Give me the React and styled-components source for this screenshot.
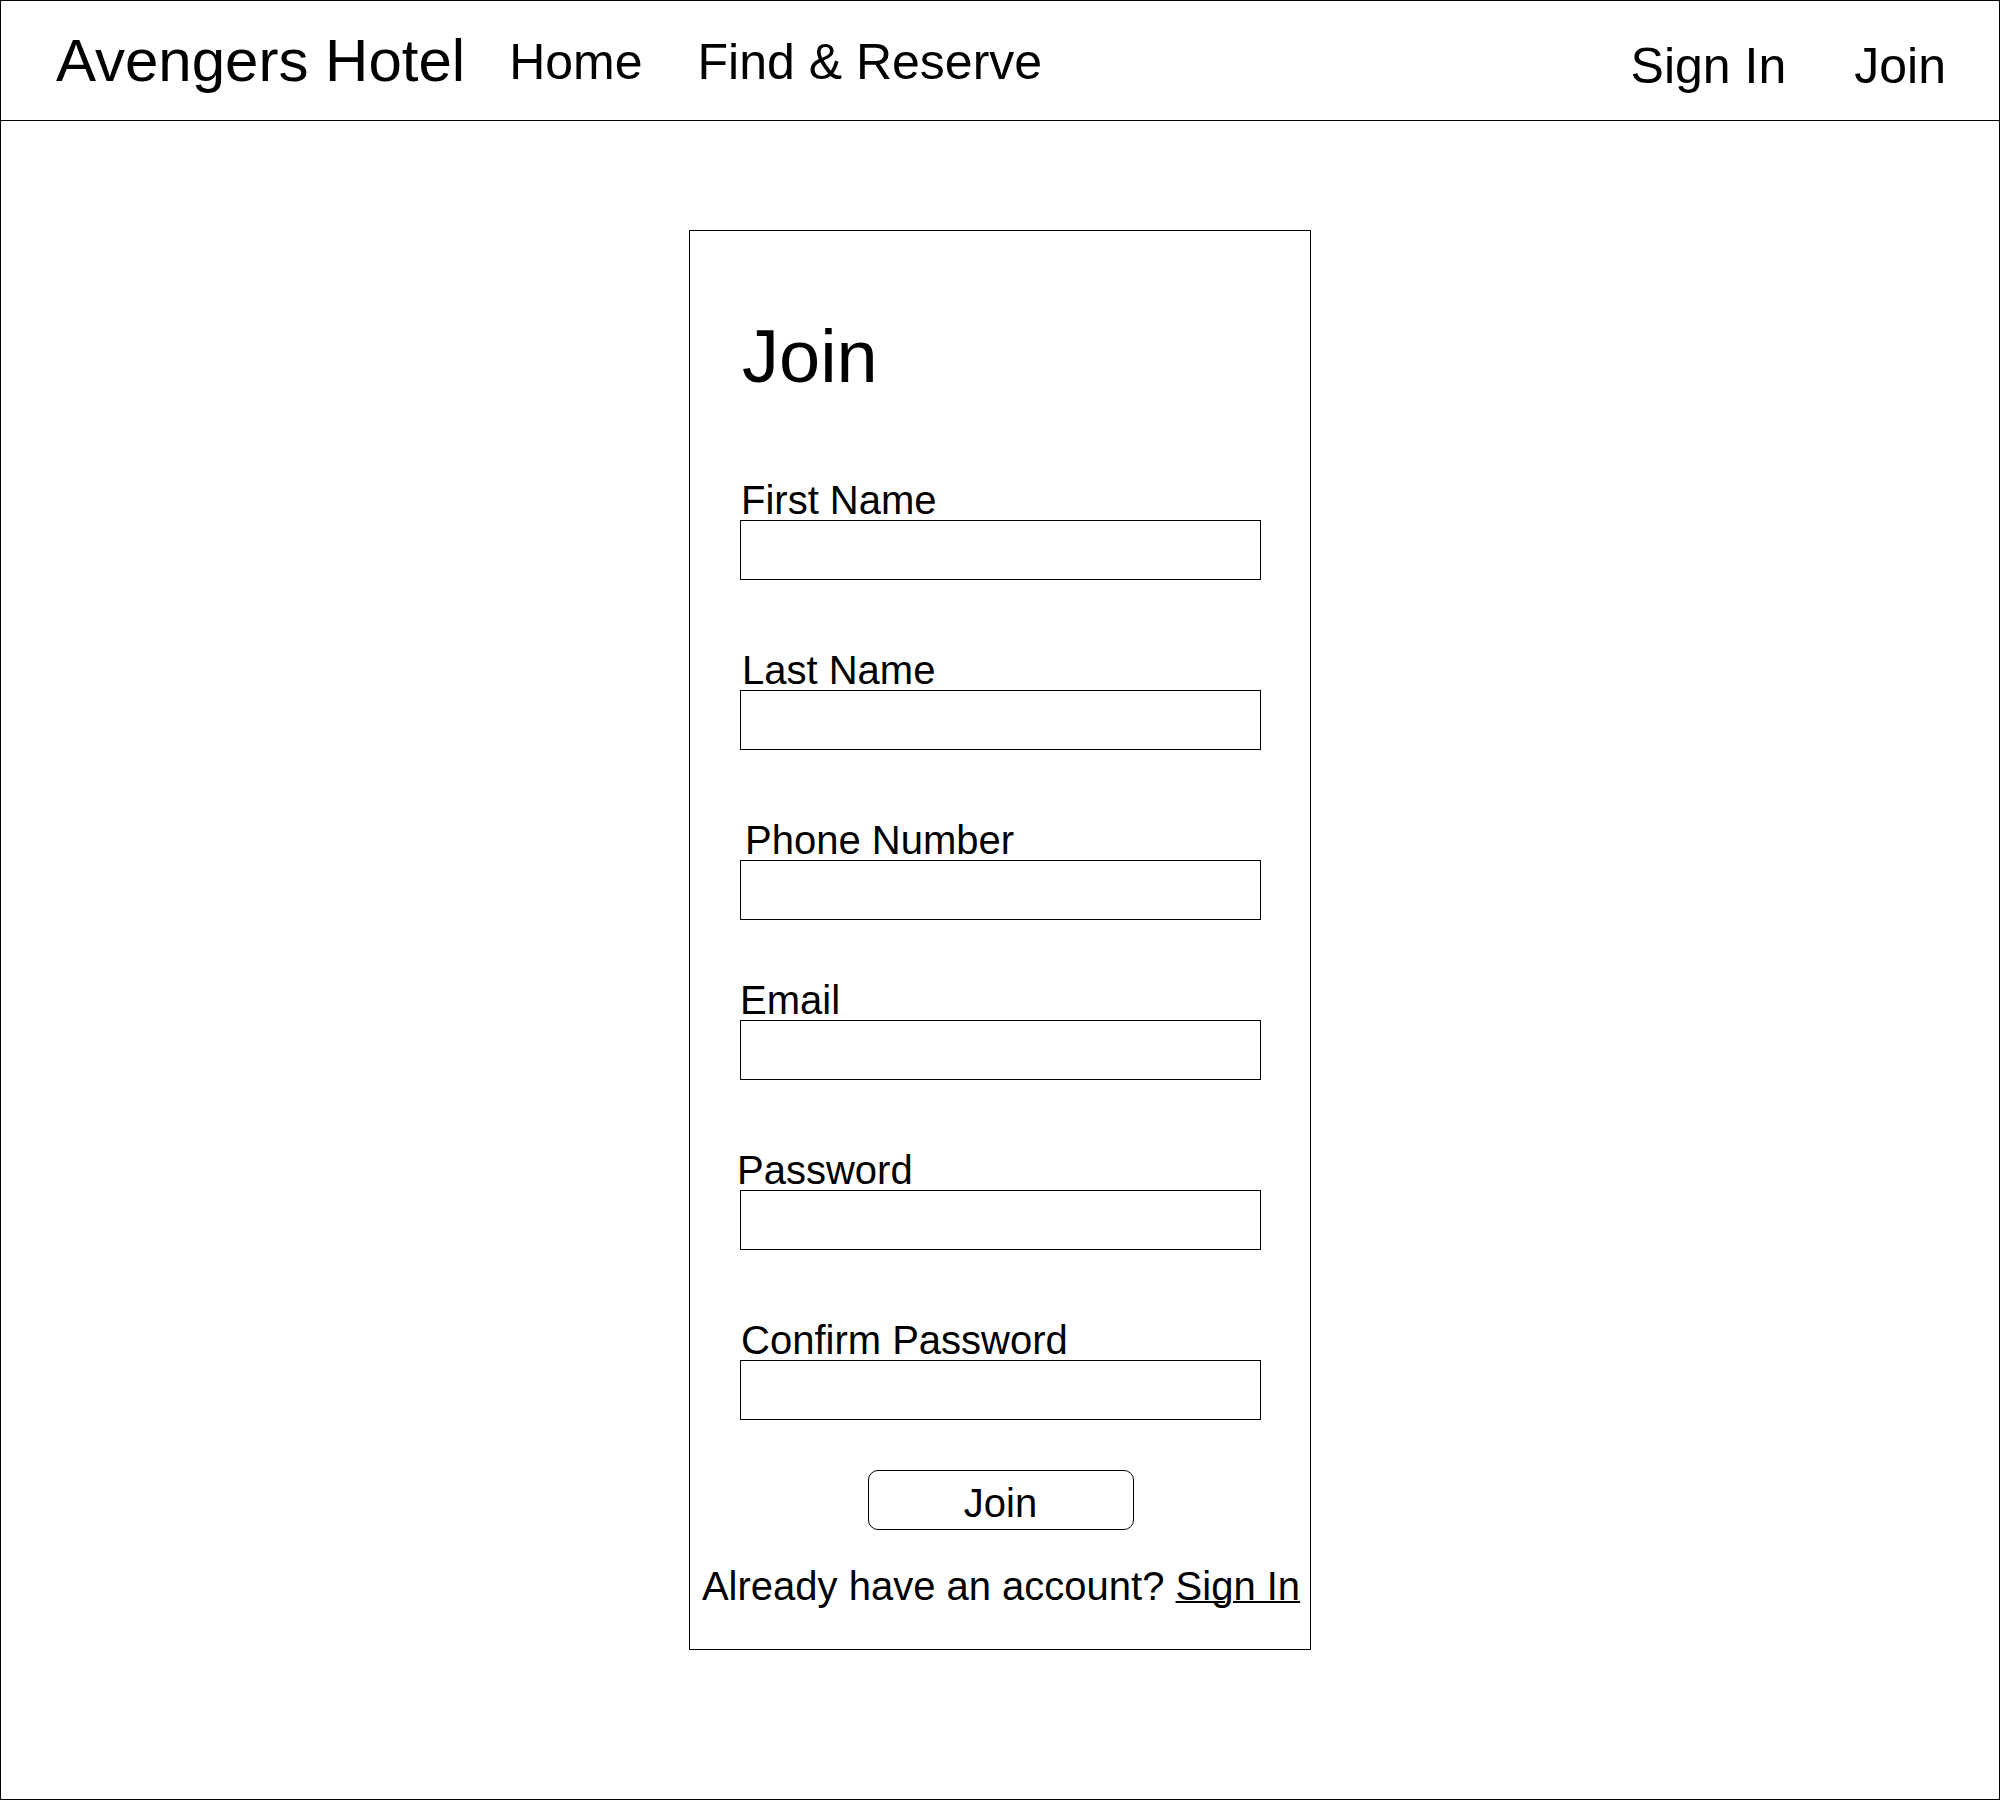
import React from 'react'
import styled, { createGlobalStyle } from 'styled-components'

const GlobalStyle = createGlobalStyle`
	html, body {
		margin: 0;
		padding: 0;
		background: #fff;
	}
	body {
		font-family: "Liberation Sans", Arial, sans-serif;
		color: #000;
	}
`

const FIELDS = [
	{ name: 'firstName', label: 'First Name', gap: 86, shift: 2 },
	{ name: 'lastName', label: 'Last Name', gap: 70, shift: 3 },
	{ name: 'phone', label: 'Phone Number', gap: 70, shift: 6 },
	{ name: 'email', label: 'Email', gap: 60, shift: 1, type: 'email' },
	{ name: 'password', label: 'Password', gap: 70, shift: -2, type: 'password' },
	{ name: 'confirm', label: 'Confirm Password', gap: 70, shift: 2, type: 'password' },
]

//
const Field = ({ name, label, gap, shift, type = 'text' }) => (
	<FieldWrapper $gap={gap}>
		<Label htmlFor={name} $shift={shift}>
			{label}
		</Label>
		<TextInput id={name} name={name} type={type} />
	</FieldWrapper>
)

//
const App = () => (
	<>
		<GlobalStyle />
		<Frame>
			<Header>
				<Brand>Avengers Hotel</Brand>
				<NavGroup $top={36}>
					<NavLink>Home</NavLink>
					<NavLink>Find &amp; Reserve</NavLink>
				</NavGroup>
				<NavGroup $top={40} $right>
					<NavLink>Sign In</NavLink>
					<NavLink>Join</NavLink>
				</NavGroup>
			</Header>

			<Card>
				<Title>Join</Title>
				{FIELDS.map(f => (
					<Field key={f.name} {...f} />
				))}
				<JoinButton type="button">Join</JoinButton>
				<Footer>
					Already have an account? <FooterLink>Sign In</FooterLink>
				</Footer>
			</Card>
		</Frame>
	</>
)

export default App

const Frame = styled.div`
	width: 2000px;
	height: 1800px;
	box-sizing: border-box;
	border: 1px solid #000;
	display: flex;
	flex-direction: column;
`

const Header = styled.header`
	height: 120px;
	box-sizing: border-box;
	border-bottom: 1px solid #000;
	display: flex;
	align-items: flex-start;
	padding: 0 53px 0 55px;
`

const Brand = styled.div`
	font-size: 60px;
	line-height: 1;
	margin-top: 30px;
	margin-right: 44px;
	white-space: nowrap;
`

const NavGroup = styled.nav`
	display: flex;
	gap: ${p => (p.$right ? 68 : 55)}px;
	margin-top: ${p => p.$top}px;
	margin-left: ${p => (p.$right ? 'auto' : '0')};
`

const NavLink = styled.span`
	font-size: 50px;
	line-height: 1;
	white-space: nowrap;
	cursor: pointer;
`

const Card = styled.main`
	width: 622px;
	box-sizing: border-box;
	margin: 109px auto 0;
	border: 1px solid #000;
	padding: 89px 49px 43px 50px;
	display: flex;
	flex-direction: column;
`

const Title = styled.h1`
	margin: 0 0 0 2px;
	font-size: 74px;
	font-weight: normal;
	line-height: 1;
`

const FieldWrapper = styled.div`
	display: flex;
	flex-direction: column;
	margin-top: ${p => p.$gap}px;
`

const Label = styled.label`
	font-size: 40px;
	line-height: 1;
	margin-left: ${p => p.$shift - 1}px;
	white-space: nowrap;
`

const TextInput = styled.input`
	height: 60px;
	width: 100%;
	box-sizing: border-box;
	border: 1px solid #000;
	border-radius: 0;
	margin: 0;
	padding: 0 10px;
	font: inherit;
	font-size: 30px;
	outline: none;
	background: #fff;
`

const JoinButton = styled.button`
	align-self: center;
	width: 266px;
	height: 60px;
	margin-top: 50px;
	box-sizing: border-box;
	border: 1px solid #000;
	border-radius: 10px;
	background: #fff;
	color: #000;
	font-family: "Liberation Sans", Arial, sans-serif;
	font-size: 40px;
	line-height: 1;
	padding: 6px 0 0;
	cursor: pointer;
`

const Footer = styled.p`
	margin: 36px -50px 0 -49px;
	font-size: 40px;
	line-height: 1;
	text-align: center;
	white-space: nowrap;
`

const FooterLink = styled.span`
	text-decoration: underline;
	text-decoration-thickness: 2px;
	cursor: pointer;
`
